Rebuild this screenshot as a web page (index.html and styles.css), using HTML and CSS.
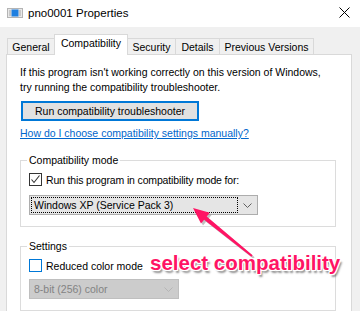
FILE: index.html
```html
<!DOCTYPE html>
<html>
<head>
<meta charset="utf-8">
<link rel="stylesheet" href="styles.css">
</head>
<body>
<div class="window">
  <div class="titlebar">
    <svg class="app-icon" width="16" height="10" viewBox="0 0 16 10">
      <rect x="0.5" y="0.5" width="15" height="9" fill="#e8e8e8" stroke="#b4b4b4"/>
      <rect x="2" y="2" width="2" height="6" fill="#c8c8c8"/>
      <rect x="12" y="2" width="2" height="6" fill="#c8c8c8"/>
      <rect x="4.5" y="1.5" width="7" height="7" fill="#1e7fe0"/>
    </svg>
    <span class="title">pno0001 Properties</span>
    <svg class="close" width="11" height="11" viewBox="0 0 11 11">
      <path d="M0.5 0.5 L10.5 10.5 M10.5 0.5 L0.5 10.5" stroke="#000" stroke-width="1" fill="none"/>
    </svg>
  </div>
  <div class="frame">
    <div class="tabs">
      <div class="tab t-general">General</div>
      <div class="tab t-compat active">Compatibility</div>
      <div class="tab t-security">Security</div>
      <div class="tab t-details">Details</div>
      <div class="tab t-prev">Previous Versions</div>
    </div>
    <div class="panel">
      <p class="intro">If this program isn't working correctly on this version of Windows,<br>try running the compatibility troubleshooter.</p>
      <div class="btn">Run compatibility troubleshooter</div>
      <a class="link">How do I choose compatibility settings manually?</a>
      <fieldset class="group g-compat">
        <legend>Compatibility mode</legend>
        <div class="check-row">
          <span class="checkbox checked">
            <svg width="11" height="11" viewBox="0 0 11 11"><path d="M1.5 5.5 L4 8.5 L9.5 1.5" stroke="#333" stroke-width="1.1" fill="none"/></svg>
          </span>
          <span class="tight">Run this program in compatibility mode for:</span>
        </div>
        <div class="combo c-os">
          <div class="combo-value">Windows XP (Service Pack 3)</div>
          <div class="combo-arrow">
            <svg width="9" height="5" viewBox="0 0 9 5"><path d="M0.5 0.5 L4.5 4.5 L8.5 0.5" stroke="#606060" stroke-width="1" fill="none"/></svg>
          </div>
        </div>
      </fieldset>
      <fieldset class="group g-settings">
        <legend>Settings</legend>
        <div class="check-row">
          <span class="checkbox unchecked"></span>
          <span>Reduced color mode</span>
        </div>
        <div class="combo c-color disabled">
          <div class="combo-value">8-bit (256) color</div>
          <div class="combo-arrow">
            <svg width="9" height="5" viewBox="0 0 9 5"><path d="M0.5 0.5 L4.5 4.5 L8.5 0.5" stroke="#b5b5b5" stroke-width="1" fill="none"/></svg>
          </div>
        </div>
      </fieldset>
    </div>
  </div>
  <div class="annotation">
    <svg class="arrow" width="360" height="311" viewBox="0 0 360 311">
      <polygon points="195,210 211.8,214.7 208.7,218.5 254.6,257.2 253.4,258.8 206.1,221.7 203,225.5" fill="#9a9a9a" opacity="0.6"/>
      <polygon points="193,208 209.8,212.7 206.7,216.5 252.6,255.2 251.4,256.8 204.1,219.7 201,223.5" fill="#ff1464"/>
    </svg>
    <div class="callout">select compatibility</div>
  </div>
</div>
</body>
</html>
```
FILE: styles.css
```css
html, body {
  margin: 0;
  padding: 0;
  width: 360px;
  height: 311px;
  overflow: hidden;
}
body {
  font-family: "Liberation Sans", Arial, sans-serif;
  font-size: 10.5px;
  color: #000;
}
.window {
  position: relative;
  width: 360px;
  height: 311px;
  display: flex;
  flex-direction: column;
  background: #f0f0f0;
}
.titlebar {
  height: 30px;
  background: #fff;
  display: flex;
  align-items: center;
  padding-left: 7px;
  padding-right: 10px;
  box-sizing: border-box;
}
.app-icon {
  margin-top: -2px;
}
.title {
  margin-left: 5px;
  font-size: 11.5px;
  margin-top: -1px;
  flex: 1;
}
.close {
  margin-top: -2px;
}
.frame {
  flex: 1;
  display: flex;
  flex-direction: column;
}
.tabs {
  height: 27px;
  display: flex;
  align-items: flex-end;
  padding-left: 7px;
  box-sizing: border-box;
}
.tab {
  box-sizing: border-box;
  height: 16px;
  border: 1px solid #d9d9d9;
  border-bottom: none;
  margin-right: -1px;
  background: #f0f0f0;
  display: flex;
  justify-content: center;
  align-items: center;
  padding-top: 1px;
  white-space: nowrap;
}
.tab.active {
  height: 21px;
  background: #fff;
  margin-bottom: -1px;
  position: relative;
  z-index: 1;
  align-items: flex-start;
  padding-top: 2px;
}
.t-general { width: 48px; }
.t-compat { width: 74px; }
.t-security { width: 49px; }
.t-details { width: 45px; }
.t-prev { width: 95px; }
.panel {
  flex: 1;
  margin: 0 8px 0 6px;
  background: #fff;
  border: 1px solid #d9d9d9;
  border-bottom: none;
  padding: 10px 0 0 13px;
  display: flex;
  flex-direction: column;
  align-items: flex-start;
}
.intro {
  margin: 0;
  line-height: 15px;
}
.btn {
  margin: 6px 0 0 1px;
  width: 178px;
  height: 20px;
  box-sizing: border-box;
  border: 2px solid #0078d7;
  background: #e1e1e1;
  display: flex;
  align-items: center;
  justify-content: center;
}
.link {
  margin-top: 5px;
  line-height: 15px;
  color: #0066cc;
  text-decoration: underline;
}
.group {
  margin: 12px 0 0 0;
  padding: 0 8px 11px 8px;
  width: 316px;
  box-sizing: border-box;
  border: 1px solid #dcdcdc;
  min-inline-size: 0;
}
.group legend {
  padding: 0 2px;
  margin-left: -2px;
  line-height: 15px;
}
.check-row {
  display: flex;
  align-items: center;
  height: 15px;
  margin-top: 4px;
  gap: 4px;
}
.tight {
  letter-spacing: -0.15px;
}
.checkbox {
  width: 13px;
  height: 13px;
  box-sizing: border-box;
  background: #fff;
  display: flex;
  align-items: center;
  justify-content: center;
}
.checkbox.checked {
  border: 1px solid #333;
}
.checkbox.unchecked {
  border: 1px solid #0078d7;
}
.combo {
  margin-top: 8px;
  height: 20px;
  box-sizing: border-box;
  border: 1px solid #adadad;
  background: #e5e5e5;
  display: flex;
}
.c-os { width: 229px; }
.c-color {
  width: 150px;
  margin-top: 6px;
  background: #cccccc;
  border-color: #bfbfbf;
  color: #838383;
}
.combo-value {
  flex: 1;
  margin: 1px 0 1px 1px;
  padding-left: 2px;
  border: 1px dotted transparent;
  display: flex;
  align-items: center;
  white-space: nowrap;
}
.c-os .combo-value {
  border-color: #000;
}
.combo-arrow {
  width: 19px;
  display: flex;
  align-items: center;
  justify-content: center;
}
.annotation {
  position: absolute;
  left: 0;
  top: 0;
  width: 360px;
  height: 311px;
  pointer-events: none;
}
.arrow {
  position: absolute;
  left: 0;
  top: 0;
}
.callout {
  position: absolute;
  left: 150px;
  top: 251px;
  font-family: "Liberation Sans", Arial, sans-serif;
  font-weight: bold;
  font-size: 20.5px;
  color: #ff1464;
  white-space: nowrap;
  text-shadow: -1px -1px 0 #fff, 1px -1px 0 #fff, -1px 1px 0 #fff, 1px 1px 0 #fff, 0 -1px 0 #fff, 0 1px 0 #fff, -1px 0 0 #fff, 1px 0 0 #fff, 2px 3px 2px rgba(0,0,0,0.45);
}
```
